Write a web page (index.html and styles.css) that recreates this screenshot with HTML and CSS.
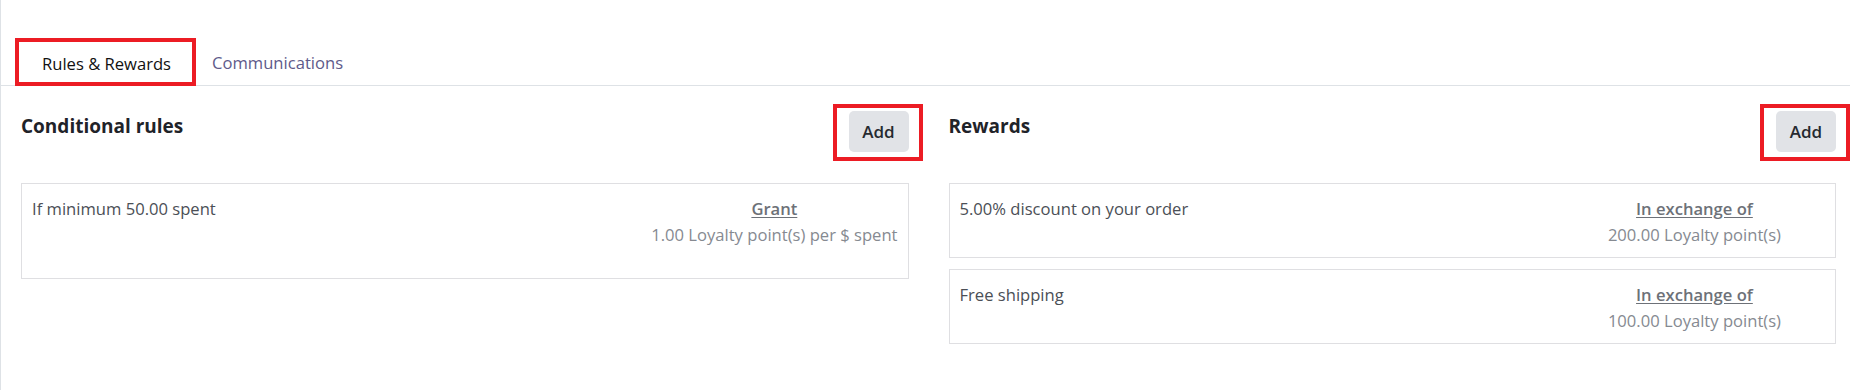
FILE: index.html
```html
<!DOCTYPE html>
<html lang="en">
<head>
<meta charset="utf-8">
<title>Rules &amp; Rewards</title>
<link rel="stylesheet" href="styles.css">
</head>
<body>
<div class="sheet">
  <nav class="tabs">
    <div class="tab tab-active">Rules &amp; Rewards</div>
    <div class="tab">Communications</div>
  </nav>
  <div class="content">
    <section class="column">
      <div class="col-head">
        <h2 class="col-title">Conditional rules</h2>
        <button class="btn-add marked">Add</button>
      </div>
      <div class="card card-tall">
        <div class="card-left">If minimum 50.00 spent</div>
        <div class="card-right">
          <div class="card-label">Grant</div>
          <div class="card-value">1.00 Loyalty point(s) per $ spent</div>
        </div>
      </div>
    </section>
    <section class="column">
      <div class="col-head">
        <h2 class="col-title">Rewards</h2>
        <button class="btn-add marked">Add</button>
      </div>
      <div class="card-list">
        <div class="card">
          <div class="card-left">5.00% discount on your order</div>
          <div class="card-right card-right-inset">
            <div class="card-label">In exchange of</div>
            <div class="card-value">200.00 Loyalty point(s)</div>
          </div>
        </div>
        <div class="card">
          <div class="card-left">Free shipping</div>
          <div class="card-right card-right-inset">
            <div class="card-label">In exchange of</div>
            <div class="card-value">100.00 Loyalty point(s)</div>
          </div>
        </div>
      </div>
    </section>
  </div>
</div>
</body>
</html>
```

FILE: styles.css
```css
* { box-sizing: border-box; }
html, body { margin: 0; padding: 0; background: #ffffff; }
body {
  font-family: "Open Sans", "Noto Sans", "Liberation Sans", sans-serif;
  color: #212529;
  font-size: 16.5px;
}
.sheet {
  height: 390px;
  border-left: 1px solid #dee2e6;
}
.tabs {
  display: flex;
  align-items: stretch;
  padding: 38px 0 0 14px;
  height: 86px;
  border-bottom: 1px solid #dee2e6;
}
.tab {
  display: flex;
  align-items: center;
  padding: 2px 16px 0 16px;
  color: #5e5a8a;
  font-size: 16.6px;
  height: 47px;
}
.tab-active {
  color: #111111;
  padding: 2px 21px 0 23px;
  border: 4px solid #ec1c24;
  height: 48px;
}
.content {
  display: grid;
  grid-template-columns: 1fr 1fr;
  column-gap: 40px;
  padding: 25px 14px 0 20px;
}
.col-head {
  display: flex;
  justify-content: space-between;
  align-items: flex-start;
  height: 72px;
}
.col-title {
  margin: 0;
  font-size: 19px;
  font-weight: 700;
  color: #1f2329;
  line-height: 26px;
  padding-top: 2px;
}
.btn-add {
  position: relative;
  width: 60px;
  height: 41px;
  border: none;
  border-radius: 5px;
  background: #e1e3e7;
  color: #262a30;
  font-family: inherit;
  font-size: 17px;
  font-weight: 600;
  padding: 0;
}
.marked::after {
  content: "";
  position: absolute;
  top: -7px;
  bottom: -9px;
  left: -16px;
  right: -14px;
  border: 4px solid #ec1c24;
}
.card-list {
  display: flex;
  flex-direction: column;
  gap: 11px;
}
.card {
  display: flex;
  justify-content: space-between;
  align-items: flex-start;
  border: 1px solid #dfdfe2;
  padding: 12px 10px 9px 10px;
  line-height: 26px;
  font-size: 16.6px;
}
.card-tall { padding-bottom: 30px; }
.card-left { color: #4b4f56; }
.card-right {
  text-align: center;
}
.card-right-inset { margin-right: 44px; }
.card-label {
  color: #6d7178;
  font-weight: 600;
  text-decoration: underline;
  text-underline-offset: 2px;
}
.card-value { color: #868a91; }
```
